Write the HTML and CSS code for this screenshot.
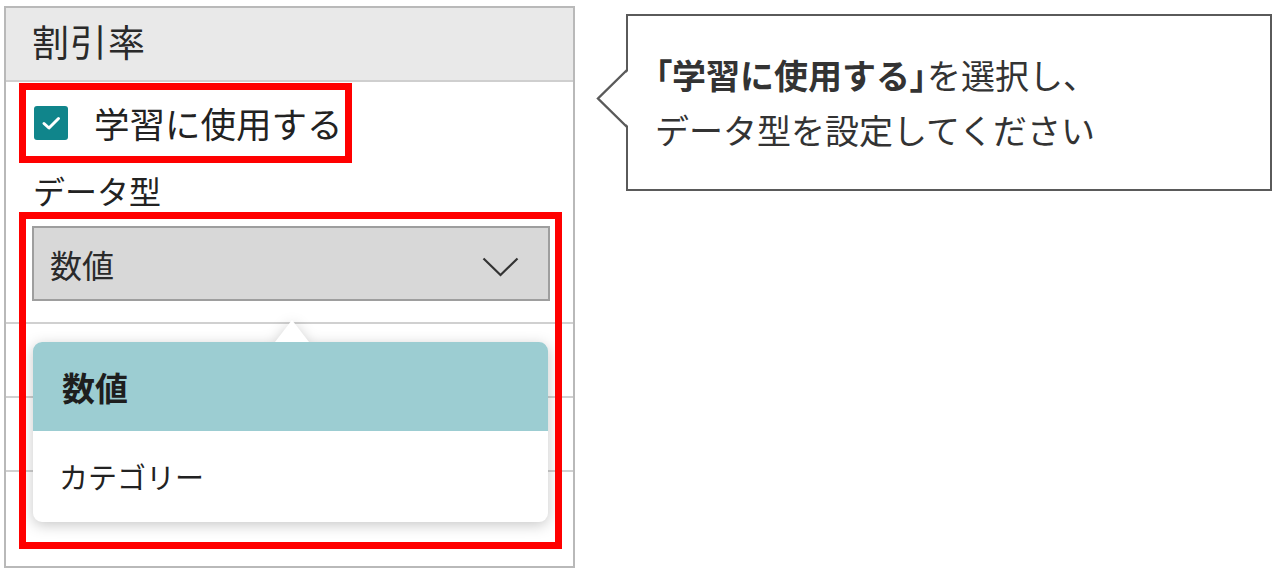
FILE: index.html
```html
<!DOCTYPE html>
<html lang="ja">
<head>
<meta charset="utf-8">
<link rel="stylesheet" href="styles.css">
</head>
<body>
<div class="page">
  <div class="panel">
    <div class="panel-header">割引率</div>
    <div class="check-row">
      <span class="checkbox">
        <svg width="34" height="34" viewBox="0 0 34 34"><path d="M10 17.5 L15 22 L24.5 12.5" fill="none" stroke="#fff" stroke-width="3" stroke-linecap="round" stroke-linejoin="round"/></svg>
      </span>
      <span class="check-label">学習に使用する</span>
    </div>
    <div class="field-label">データ型</div>
    <div class="select">
      <span class="select-value">数値</span>
      <svg class="chevron" width="37" height="20" viewBox="0 0 37 20"><polyline points="1.5,1.5 18.5,18 35.5,1.5" fill="none" stroke="#333" stroke-width="2.2"/></svg>
    </div>
    <div class="rows">
      <div class="row"></div>
      <div class="row"></div>
      <div class="row"></div>
    </div>
    <div class="dropdown">
      <div class="option selected">数値</div>
      <div class="option">カテゴリー</div>
    </div>
    <div class="highlight"></div>
  </div>
  <div class="callout">
    <svg class="callout-pointer" width="34" height="61" viewBox="0 0 34 61"><polygon points="33,1 4,29.5 33,58" fill="#fff"/><polyline points="31,1 2,29.5 31,58" fill="none" stroke="#5a5a5a" stroke-width="2.4"/></svg>
    <p class="callout-line"><b><span class="br">「</span>学習に使用する<span class="br">」</span></b>を選択し、</p>
    <p class="callout-line">データ型を設定してください</p>
  </div>
</div>
</body>
</html>
```
FILE: styles.css
```css
html, body {
  margin: 0;
  padding: 0;
  background: #fff;
}
body {
  width: 1276px;
  height: 580px;
  overflow: hidden;
  font-family: "Noto Sans CJK JP", "Noto Sans", sans-serif;
  color: #2a2a2a;
}
.page {
  display: flex;
  align-items: flex-start;
}
.panel {
  position: relative;
  box-sizing: border-box;
  width: 571px;
  height: 562px;
  margin: 6px 0 0 4px;
  border: 2px solid #b9b9b9;
  background: #fff;
}
.panel-header {
  box-sizing: border-box;
  height: 74px;
  background: #e9e9e9;
  border-bottom: 2px solid #cfcfcf;
  padding-left: 26px;
  font-size: 37px;
  line-height: 66px;
  letter-spacing: 1px;
  color: #2a2a2a;
}
.check-row {
  box-sizing: border-box;
  display: flex;
  align-items: center;
  width: 333px;
  height: 80px;
  margin: 1px 0 0 13px;
  border: 7px solid #ff0000;
  padding-left: 8px;
  white-space: nowrap;
}
.checkbox {
  display: block;
  flex: none;
  width: 34px;
  height: 34px;
  border-radius: 3px;
  background: #10858b;
}
.checkbox svg {
  display: block;
}
.check-label {
  margin-left: 26px;
  font-size: 35.5px;
  line-height: 40px;
  color: #222;
  white-space: nowrap;
}
.field-label {
  margin: 6px 0 0 27px;
  font-size: 32px;
  line-height: 42px;
  color: #222;
}
.select {
  box-sizing: border-box;
  display: flex;
  align-items: center;
  justify-content: space-between;
  width: 518px;
  height: 75px;
  margin: 15px 0 0 26px;
  padding: 0 29px 0 16px;
  background: #d8d8d8;
  border: 2px solid #9e9e9e;
}
.select-value {
  font-size: 32px;
  line-height: 40px;
  color: #2a2a2a;
}
.chevron {
  display: block;
  margin-top: 6px;
}
.rows {
  margin-top: 21px;
}
.row {
  box-sizing: border-box;
  height: 74px;
  border-top: 2px solid #d0d0d0;
}
.dropdown {
  position: absolute;
  left: 27px;
  top: 334px;
  width: 515px;
  height: 180px;
  background: #fff;
  border-radius: 9px;
  filter: drop-shadow(0 3px 7px rgba(0, 0, 0, 0.22));
}
.dropdown::before {
  content: "";
  position: absolute;
  left: 242px;
  top: -22px;
  width: 0;
  height: 0;
  border-left: 17px solid transparent;
  border-right: 17px solid transparent;
  border-bottom: 22px solid #fff;
}
.option {
  box-sizing: border-box;
  height: 90px;
  padding-left: 26px;
  display: flex;
  align-items: center;
  font-size: 29px;
  color: #222;
}
.option.selected {
  height: 89px;
  background: #9ccdd2;
  border-radius: 9px 9px 0 0;
  font-size: 33px;
  font-weight: bold;
  padding-left: 29px;
  color: #1e1e1e;
}
.highlight {
  position: absolute;
  left: 13px;
  top: 204px;
  box-sizing: border-box;
  width: 543px;
  height: 337px;
  border: 7px solid #ff0000;
  pointer-events: none;
}
.callout {
  position: relative;
  box-sizing: border-box;
  width: 646px;
  height: 177px;
  margin: 14px 0 0 51px;
  border: 2.4px solid #5a5a5a;
  padding: 31px 0 0 27px;
  background: #fff;
}
.callout-pointer {
  position: absolute;
  left: -32px;
  top: 53px;
  display: block;
}
.callout-line {
  margin: 0;
  font-size: 34px;
  line-height: 55px;
  color: #333;
  white-space: nowrap;
}
.callout-line b {
  font-weight: bold;
  color: #333;
}
.br {
  font-feature-settings: "palt";
}
```
